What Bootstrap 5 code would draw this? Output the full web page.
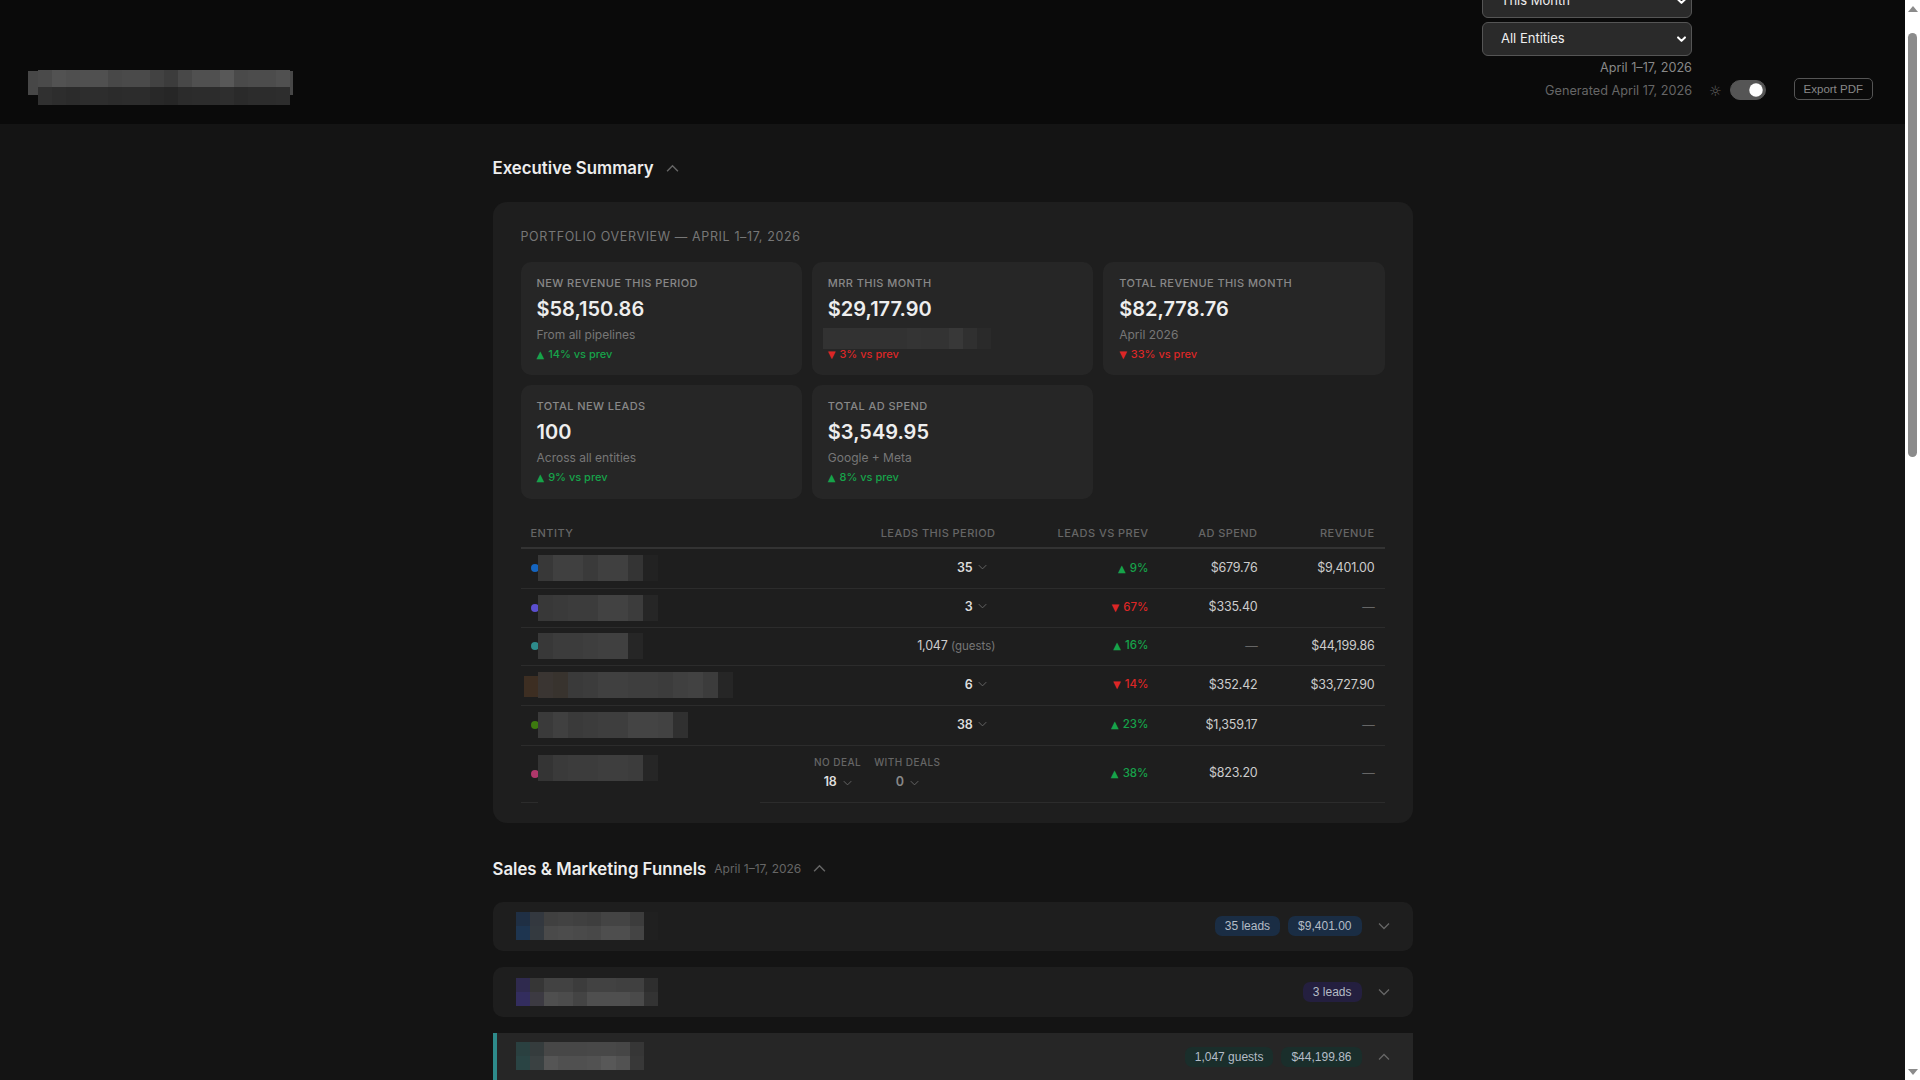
<!doctype html>
<html lang="en">
<head>
    <meta charset="utf-8">
    <title>Portfolio Report</title>
    <meta name="viewport" content="width=device-width, initial-scale=1">
    <link href="https://cdn.jsdelivr.net/npm/bootstrap@5.3.3/dist/css/bootstrap.min.css" rel="stylesheet">
    <style>
        html, body { height: 100%; overflow: hidden; }
        body { background: #141414; color: #ddd; font-family: Inter, "Liberation Sans", sans-serif; font-size: 13px; }

        /* ---------- frame + fake scrollbar ---------- */
        .rail { width: 15px; background: #fff; flex: none; }
        .rail-up, .rail-down { height: 17px; display: flex; align-items: center; justify-content: center; flex: none; }
        .rail-up::before { content: ""; border: 5px solid transparent; border-top: 0; border-bottom: 6px solid #8b8b8b; }
        .rail-down::before { content: ""; border: 5px solid transparent; border-bottom: 0; border-top: 6px solid #8b8b8b; }
        .rail-track { flex: 1 1 auto; padding: 16px 3px 0; }
        .rail-thumb { height: 424px; background: #8b8b8b; border-radius: 5px; }
        .page-col { min-width: 0; }

        /* ---------- header ---------- */
        .top-bar { height: 124px; background: #0a0a0a; padding: 0 32px 24px 38px; overflow: hidden; }
        .brand { width: 252px; height: 35px; margin-bottom: -5px; position: relative; }
        .brand-edge { position: absolute; left: -10px; width: 265px; top: 1px; height: 24px; background: #474747; z-index: 0; }
        .brand .blur-bar { position: relative; z-index: 1; }
        .filter-col { width: 210px; margin-right: 1px; }
        .dark-select { height: 34px; background-color: #2a2a2a; border: 1px solid #555; border-radius: 6px; color: #eee; font-size: 13px; padding: 0 18px; --bs-form-select-bg-img: url("data:image/svg+xml,%3csvg xmlns='http://www.w3.org/2000/svg' viewBox='0 0 16 16'%3e%3cpath fill='none' stroke='%23fff' stroke-linecap='round' stroke-linejoin='round' stroke-width='3' d='m3 5 5 5 5-5'/%3e%3c/svg%3e"); background-position: right 4px center; background-size: 11px 11px; }
        .dark-select:focus { background-color: #2a2a2a; color: #eee; border-color: #555; box-shadow: none; }
        .range-line { color: #888; font-size: 12.7px; height: 16px; line-height: 16px; }
        .gen-line { color: #666; font-size: 12.7px; height: 18px; line-height: 18px; margin-top: 6px; }
        .sun { color: #666; font-size: 14px; line-height: 18px; font-family: "DejaVu Sans", sans-serif; }
        .theme-switch { min-height: 0; padding: 0; margin: 0 0 0 8px; }
        .theme-switch .form-check-input { width: 36px; height: 20px; margin: 0; float: none; display: block; background-color: #555; border-color: #555; --bs-form-switch-bg: url("data:image/svg+xml,%3csvg xmlns='http://www.w3.org/2000/svg' viewBox='-4 -4 8 8'%3e%3ccircle r='3.2' fill='%23e2e2e2'/%3e%3c/svg%3e"); }
        .btn-export { font-family: "Liberation Sans", sans-serif; font-size: 11.5px; color: #888; border: 1px solid #555; border-radius: 5px; padding: 0 9px; height: 22px; line-height: 20px; margin-left: 28px; background: transparent; }

        /* ---------- main ---------- */
        .main-wrap { width: 920px; margin: 0 auto; }
        .sec-bar { height: 24px; }
        .sec-bar.first { margin-top: 32px; margin-bottom: 22px; }
        .sec-bar.second { margin-top: 34px; margin-bottom: 21px; }
        .sec-head { color: #eee; font-size: 16.8px; font-weight: 600; line-height: 22px; margin: 0; }
        .sec-date { color: #666; font-size: 12px; font-weight: 400; }
        .sec-chev { margin-left: 12px; }
        .summary-panel { background: #1e1e1e; border-radius: 14px; padding: 28px 28px 20px; }
        .panel-cap { color: #777; font-size: 12.5px; letter-spacing: .62px; line-height: 14px; margin-bottom: 18px; }

        .kpi-grid { display: grid; grid-template-columns: repeat(3, 1fr); gap: 10px; margin-bottom: 27px; }
        .kpi-tile { background: #262626; border-radius: 10px; padding: 14px 16px 0; height: 113px; position: relative; }
        .kpi-tile.tall { height: 114px; }
        .kpi-label { color: #888; font-size: 11px; font-weight: 500; letter-spacing: .42px; line-height: 14px; }
        .kpi-value { color: #eee; font-size: 20px; font-weight: 600; line-height: 26px; margin-top: 6px; }
        .kpi-sub { color: #777; font-size: 12px; line-height: 16px; margin-top: 5px; }
        .kpi-delta { font-size: 11px; font-weight: 500; line-height: 14px; margin-top: 4px; }
        .up { color: #16a34a; }
        .down { color: #dc2626; }
        .tri { font-family: "DejaVu Sans", sans-serif; font-size: 10px; margin-right: 1px; }
        .mrr-mask { position: absolute; left: 11px; top: 66px; }

        .ent-table { --bs-table-bg: transparent; --bs-table-color: #ccc; --bs-table-border-color: #2c2c2c; table-layout: fixed; margin: 0; width: 864px; }
        .ent-table th { color: #666; font-size: 11px; font-weight: 500; letter-spacing: .45px; padding: 0 10px 7px; border-bottom: 2px solid #333; line-height: 14px; }
        .ent-table td { padding: 0 10px; vertical-align: middle; position: relative; font-size: 12.5px; letter-spacing: -.2px; }
        .ent-table td.up, .ent-table td.down { font-size: 11.5px; letter-spacing: 0; }
        .ent-dot { display: inline-block; width: 8px; height: 8px; border-radius: 50%; vertical-align: middle; }
        .ent-name { position: absolute; left: 17px; top: 50%; transform: translateY(-50%); }
        .ent-name.shift { margin-top: -6px; }
        .ent-brown { position: absolute; left: 3px; top: 10px; width: 14px; height: 21px; background: #3d2e22; }
        .ent-gap::after { content: ""; position: absolute; left: 17px; right: 0; bottom: -1px; height: 1px; background: #1e1e1e; }
        .num-strong { font-weight: 600; color: #ddd; }
        .num-dim { color: #888; }
        .muted-tag { color: #777; font-size: 11.5px; letter-spacing: 0; }
        .sub-chev { margin-left: 5px; margin-right: 9px; vertical-align: 2px; }
        .split-chev { margin-left: 6px; }
        .split-cell { gap: 13px; margin-right: 55px; }
        .split-label { color: #666; font-size: 10px; font-weight: 500; letter-spacing: .45px; line-height: 14px; }
        .dash { color: #666; }

        .funnel-item { background: #1e1e1e; border-radius: 10px; height: 49px; padding: 0 23px; margin-bottom: 16px; }
        .funnel-item.second { height: 50px; }
        .funnel-item.open { background: #262626; border-left: 4px solid #2e8b8b; border-radius: 0; height: 120px; padding: 9px 23px 0 19px; align-items: flex-start !important; }
        .pill-row { margin-top: 5px; }
        .fun-pill { font-family: "Liberation Sans", sans-serif; font-size: 12px; line-height: 20px; height: 20px; padding: 0 10px; border-radius: 7px; color: #b4bcc6; }
        .pill-blue { background: #1a2d44; }
        .pill-violet { background: #241f3f; }
        .pill-teal { background: #1a2e2b; }
    </style>
</head>
<body>

<svg width="0" height="0" class="position-absolute">
    <symbol id="chevDown" viewBox="0 0 12 8"><path d="M1 1.5 6 6.5 11 1.5" fill="none" stroke="currentColor" stroke-width="1.3"/></symbol>
    <symbol id="chevUp" viewBox="0 0 12 8"><path d="M1 6.5 6 1.5 11 6.5" fill="none" stroke="currentColor" stroke-width="1.3"/></symbol>
</svg>

<div class="d-flex vh-100 overflow-hidden">
    <div class="page-col flex-grow-1">

        <!-- ---------- HEADER ---------- -->
        <header class="top-bar d-flex justify-content-between align-items-end">
            <div class="brand">
                <div class="brand-edge"></div>
                <div class="blur-bar" data-w="14" data-h="17,18" data-px="#4a4a4a,#525252,#4f4f4f,#505050,#505050,#484848,#4a4a4a,#4a4a4a,#424242,#3c3c3c,#484848,#505050,#505050,#585858,#4a4a4a,#4c4c4c,#4c4c4c,#505050|#303030,#2d2d2d,#2b2b2b,#2d2d2d,#2d2d2d,#2b2b2b,#2c2c2c,#2c2c2c,#282828,#262626,#2b2b2b,#2c2c2c,#2c2c2c,#2e2e2e,#2a2a2a,#2c2c2c,#2c2c2c,#2d2d2d"></div>
            </div>
            <div class="d-flex align-items-end">
                <div class="filter-col d-flex flex-column align-items-end">
                    <select class="form-select dark-select mb-1"><option>This Month</option></select>
                    <select class="form-select dark-select"><option>All Entities</option></select>
                    <div class="range-line mt-1">April 1–17, 2026</div>
                    <div class="gen-line text-nowrap">Generated April 17, 2026</div>
                </div>
                <span class="sun ms-3">☼</span>
                <div class="form-check form-switch theme-switch">
                    <input class="form-check-input" type="checkbox" checked>
                </div>
                <button class="btn-export">Export PDF</button>
            </div>
        </header>

        <main class="main-wrap">

            <!-- executive summary -->
            <div class="sec-bar first d-flex align-items-center">
                <h2 class="sec-head">Executive Summary</h2>
                <svg class="sec-chev sec-date" width="13" height="9"><use href="#chevUp"/></svg>
            </div>

            <section class="summary-panel">
                <div class="panel-cap">PORTFOLIO OVERVIEW — APRIL 1–17, 2026</div>

                <div class="kpi-grid">
                    <div class="kpi-tile">
                        <div class="kpi-label">NEW REVENUE THIS PERIOD</div>
                        <div class="kpi-value">$58,150.86</div>
                        <div class="kpi-sub">From all pipelines</div>
                        <div class="kpi-delta up"><span class="tri">▲</span> 14% vs prev</div>
                    </div>
                    <div class="kpi-tile">
                        <div class="kpi-label">MRR THIS MONTH</div>
                        <div class="kpi-value">$29,177.90</div>
                        <div class="kpi-sub">&nbsp;</div>
                        <div class="kpi-delta down"><span class="tri">▼</span> 3% vs prev</div>
                        <div class="mrr-mask blur-bar" data-w="14" data-h="21" data-px="#323232,#323232,#323232,#323232,#323232,#323232,#343434,#333333,#333333,#383838,#303030,#2a2a2a"></div>
                    </div>
                    <div class="kpi-tile">
                        <div class="kpi-label">TOTAL REVENUE THIS MONTH</div>
                        <div class="kpi-value">$82,778.76</div>
                        <div class="kpi-sub">April 2026</div>
                        <div class="kpi-delta down"><span class="tri">▼</span> 33% vs prev</div>
                    </div>
                    <div class="kpi-tile tall">
                        <div class="kpi-label">TOTAL NEW LEADS</div>
                        <div class="kpi-value">100</div>
                        <div class="kpi-sub">Across all entities</div>
                        <div class="kpi-delta up"><span class="tri">▲</span> 9% vs prev</div>
                    </div>
                    <div class="kpi-tile tall">
                        <div class="kpi-label">TOTAL AD SPEND</div>
                        <div class="kpi-value">$3,549.95</div>
                        <div class="kpi-sub">Google + Meta</div>
                        <div class="kpi-delta up"><span class="tri">▲</span> 8% vs prev</div>
                    </div>
                </div>

                <table class="table ent-table">
                    <colgroup>
                        <col style="width:239px"><col style="width:246px"><col style="width:153px"><col style="width:109px"><col style="width:117px">
                    </colgroup>
                    <thead>
                        <tr>
                            <th>ENTITY</th>
                            <th class="text-end">LEADS THIS PERIOD</th>
                            <th class="text-end">LEADS VS PREV</th>
                            <th class="text-end">AD SPEND</th>
                            <th class="text-end">REVENUE</th>
                        </tr>
                    </thead>
                    <tbody>
                        <tr style="height:40px">
                            <td><span class="ent-dot" style="background:#1565c0"></span><div class="ent-name blur-bar" data-w="15" data-h="26" data-px="#383838,#404040,#404040,#3a3a3a,#404040,#404040,#343434,#222222"></div></td>
                            <td class="text-end"><span class="num-strong">35</span><svg class="sub-chev sec-date" width="9" height="6"><use href="#chevDown"/></svg></td>
                            <td class="text-end up fw-medium"><span class="tri">▲</span> 9%</td>
                            <td class="text-end">$679.76</td>
                            <td class="text-end">$9,401.00</td>
                        </tr>
                        <tr style="height:39px">
                            <td><span class="ent-dot" style="background:#5b4fcf"></span><div class="ent-name blur-bar" data-w="15" data-h="26" data-px="#383838,#3a3a3a,#3c3c3c,#3c3c3c,#424242,#424242,#3c3c3c,#262626"></div></td>
                            <td class="text-end"><span class="num-strong">3</span><svg class="sub-chev sec-date" width="9" height="6"><use href="#chevDown"/></svg></td>
                            <td class="text-end down fw-medium"><span class="tri">▼</span> 67%</td>
                            <td class="text-end">$335.40</td>
                            <td class="text-end dash">—</td>
                        </tr>
                        <tr style="height:38px">
                            <td><span class="ent-dot" style="background:#2e8b8b"></span><div class="ent-name blur-bar" data-w="15" data-h="26" data-px="#383838,#3c3c3c,#3c3c3c,#3e3e3e,#404040,#404040,#262626"></div></td>
                            <td class="text-end">1,047 <span class="muted-tag">(guests)</span></td>
                            <td class="text-end up fw-medium"><span class="tri">▲</span> 16%</td>
                            <td class="text-end dash">—</td>
                            <td class="text-end">$44,199.86</td>
                        </tr>
                        <tr style="height:40px">
                            <td><div class="ent-brown"></div><div class="ent-name blur-bar" data-w="15" data-h="26" data-px="#3a3532,#38332e,#3a3a3a,#3c3c3c,#404040,#404040,#3e3e3e,#3e3e3e,#3c3c3c,#404040,#424242,#3c3c3c,#262626"></div></td>
                            <td class="text-end"><span class="num-strong">6</span><svg class="sub-chev sec-date" width="9" height="6"><use href="#chevDown"/></svg></td>
                            <td class="text-end down fw-medium"><span class="tri">▼</span> 14%</td>
                            <td class="text-end">$352.42</td>
                            <td class="text-end">$33,727.90</td>
                        </tr>
                        <tr style="height:40px">
                            <td><span class="ent-dot" style="background:#3d7a0f"></span><div class="ent-name blur-bar" data-w="15" data-h="26" data-px="#3a3a3a,#404040,#3a3a3a,#3c3c3c,#3e3e3e,#3e3e3e,#444444,#444444,#424242,#303030"></div></td>
                            <td class="text-end"><span class="num-strong">38</span><svg class="sub-chev sec-date" width="9" height="6"><use href="#chevDown"/></svg></td>
                            <td class="text-end up fw-medium"><span class="tri">▲</span> 23%</td>
                            <td class="text-end">$1,359.17</td>
                            <td class="text-end dash">—</td>
                        </tr>
                        <tr style="height:57px">
                            <td class="ent-gap"><span class="ent-dot" style="background:#b0386b"></span><div class="ent-name shift blur-bar" data-w="15" data-h="26" data-px="#343434,#3a3a3a,#3c3c3c,#3c3c3c,#3e3e3e,#3e3e3e,#3c3c3c,#262626"></div></td>
                            <td>
                                <div class="d-flex justify-content-end split-cell text-center">
                                    <div>
                                        <div class="split-label">NO DEAL</div>
                                        <div class="mt-1"><span class="num-strong">18</span><svg class="split-chev sec-date" width="9" height="6"><use href="#chevDown"/></svg></div>
                                    </div>
                                    <div>
                                        <div class="split-label">WITH DEALS</div>
                                        <div class="mt-1"><span class="num-strong num-dim">0</span><svg class="split-chev sec-date" width="9" height="6"><use href="#chevDown"/></svg></div>
                                    </div>
                                </div>
                            </td>
                            <td class="text-end up fw-medium"><span class="tri">▲</span> 38%</td>
                            <td class="text-end">$823.20</td>
                            <td class="text-end dash">—</td>
                        </tr>
                    </tbody>
                </table>
            </section>

            <!-- funnels -->
            <div class="sec-bar second d-flex align-items-center">
                <h2 class="sec-head">Sales &amp; Marketing Funnels</h2>
                <span class="sec-date ms-2">April 1–17, 2026</span>
                <svg class="sec-chev sec-date" width="13" height="9"><use href="#chevUp"/></svg>
            </div>

            <div class="funnel-item d-flex align-items-center justify-content-between">
                <div class="blur-bar" data-w="14.3" data-h="14,14" data-px="#1f2f44,#33383f,#404040,#424242,#404040,#3e3e3e,#444444,#444444,#3c3c3c,#202020|#1e3550,#343a40,#4a4a4a,#4c4c4c,#4a4a4a,#484848,#4e4e4e,#4e4e4e,#444444,#202020"></div>
                <div class="d-flex align-items-center gap-2">
                    <span class="fun-pill pill-blue">35 leads</span>
                    <span class="fun-pill pill-blue">$9,401.00</span>
                    <svg class="ms-2 sec-date" width="12" height="8"><use href="#chevDown"/></svg>
                </div>
            </div>
            <div class="funnel-item second d-flex align-items-center justify-content-between">
                <div class="blur-bar" data-w="14.3" data-h="14,14" data-px="#2f2a4e,#363636,#424242,#424242,#3c3c3c,#424242,#424242,#404040,#404040,#2e2e2e|#332d5e,#3c3a42,#4f4f4f,#4c4c4c,#444444,#4f4f4f,#4f4f4f,#4f4f4f,#4a4a4a,#333333"></div>
                <div class="d-flex align-items-center gap-2">
                    <span class="fun-pill pill-violet">3 leads</span>
                    <svg class="ms-2 sec-date" width="12" height="8"><use href="#chevDown"/></svg>
                </div>
            </div>
            <div class="funnel-item open d-flex justify-content-between">
                <div class="blur-bar" data-w="14.3" data-h="14,14" data-px="#2a4040,#353c3d,#474747,#474747,#474747,#484848,#484848,#464646,#363636|#2a4444,#3a4142,#555555,#505050,#505050,#525252,#585858,#525252,#383838"></div>
                <div class="pill-row d-flex align-items-center gap-2">
                    <span class="fun-pill pill-teal">1,047 guests</span>
                    <span class="fun-pill pill-teal">$44,199.86</span>
                    <svg class="ms-2 sec-date" width="12" height="8"><use href="#chevUp"/></svg>
                </div>
            </div>
        </main>
    </div>

    <div class="rail d-flex flex-column">
        <div class="rail-up"></div>
        <div class="rail-track"><div class="rail-thumb"></div></div>
        <div class="rail-down"></div>
    </div>
</div>

<script>
    /* ---------- redacted name blocks: rows of flat colour cells ---------- */
    document.querySelectorAll('.blur-bar').forEach(el => {
        const w = +el.dataset.w;
        const heights = el.dataset.h.split(',');
        el.dataset.px.split('|').forEach((row, i) => {
            const line = document.createElement('div');
            line.className = 'd-flex';
            row.split(',').forEach(c => {
                const cell = document.createElement('div');
                cell.style.cssText = `width:${w}px;height:${heights[i]}px;background:${c};flex:none`;
                line.appendChild(cell);
            });
            el.appendChild(line);
        });
    });
</script>
</body>
</html>
